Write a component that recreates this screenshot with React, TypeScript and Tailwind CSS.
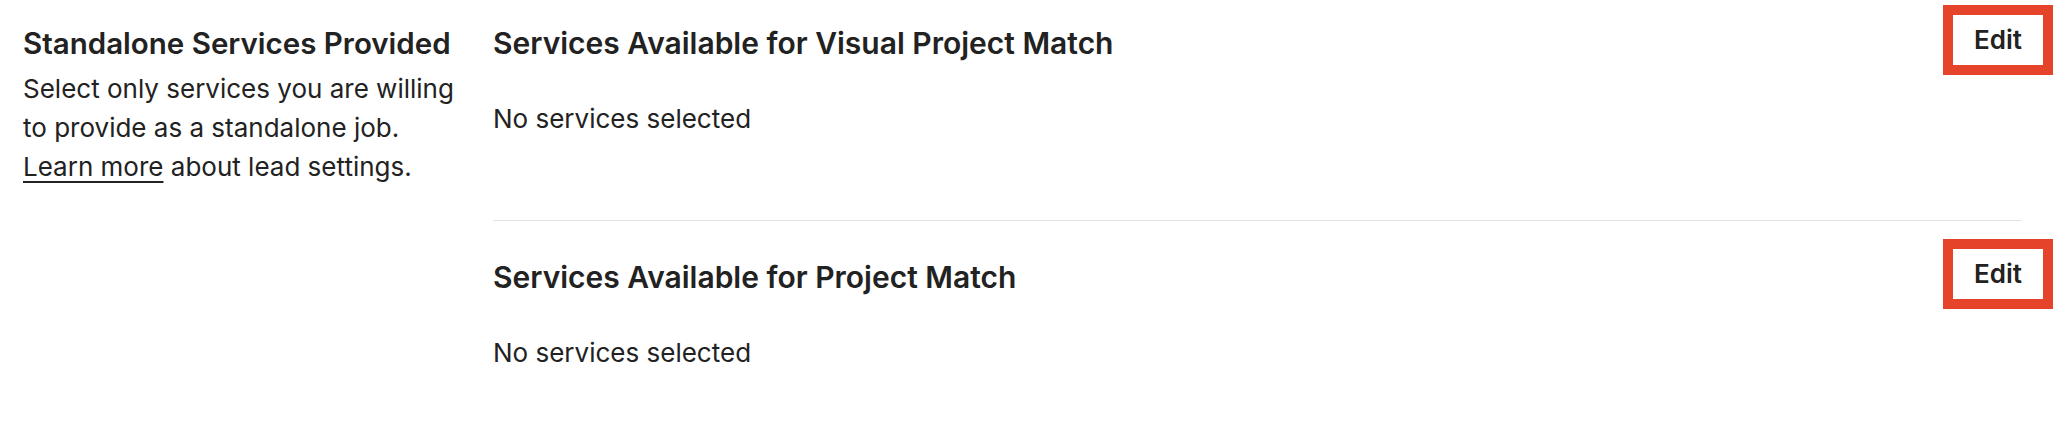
const ServiceSection = ({ title, divider }: { title: string; divider?: boolean }) => {
  return (
    <div className={divider ? "border-t border-[#e2e2e2] pt-[37px]" : ""}>
      <div className="flex items-center justify-between">
        <h3 className="text-[30px] font-semibold leading-[38px]">{title}</h3>
        <button className="-mt-[19px] -mb-[13px] -mr-[31px] h-[70px] w-[110px] border-[10px] border-[#e6432b] bg-white text-[26px] font-semibold leading-[50px] text-[#222]">
          Edit
        </button>
      </div>
      <p className={`mt-[37px] text-[26px] leading-[39px] ${divider ? "" : "pb-[82px]"}`}>
        No services selected
      </p>
    </div>
  );
};

export default function App() {
  return (
    <div
      className="flex h-[436px] w-full bg-white pt-[24px] text-[#222]"
      style={{ fontFamily: "Inter, 'Noto Sans', sans-serif" }}
    >
      <div className="w-[468px] shrink-0 pl-[23px]">
        <h2 className="text-[29.5px] font-semibold leading-[38px]">Standalone Services Provided</h2>
        <p className="mt-[7px] text-[26px] leading-[39px]">
          Select only services you are willing to provide as a standalone job.{" "}
          <a href="#" className="underline decoration-[1.5px] underline-offset-[5px]">
            Learn more
          </a>{" "}
          about lead settings.
        </p>
      </div>
      <div className="flex-1 pl-[25px] pr-[48px]">
        <ServiceSection title="Services Available for Visual Project Match" />
        <ServiceSection title="Services Available for Project Match" divider />
      </div>
    </div>
  );
}
